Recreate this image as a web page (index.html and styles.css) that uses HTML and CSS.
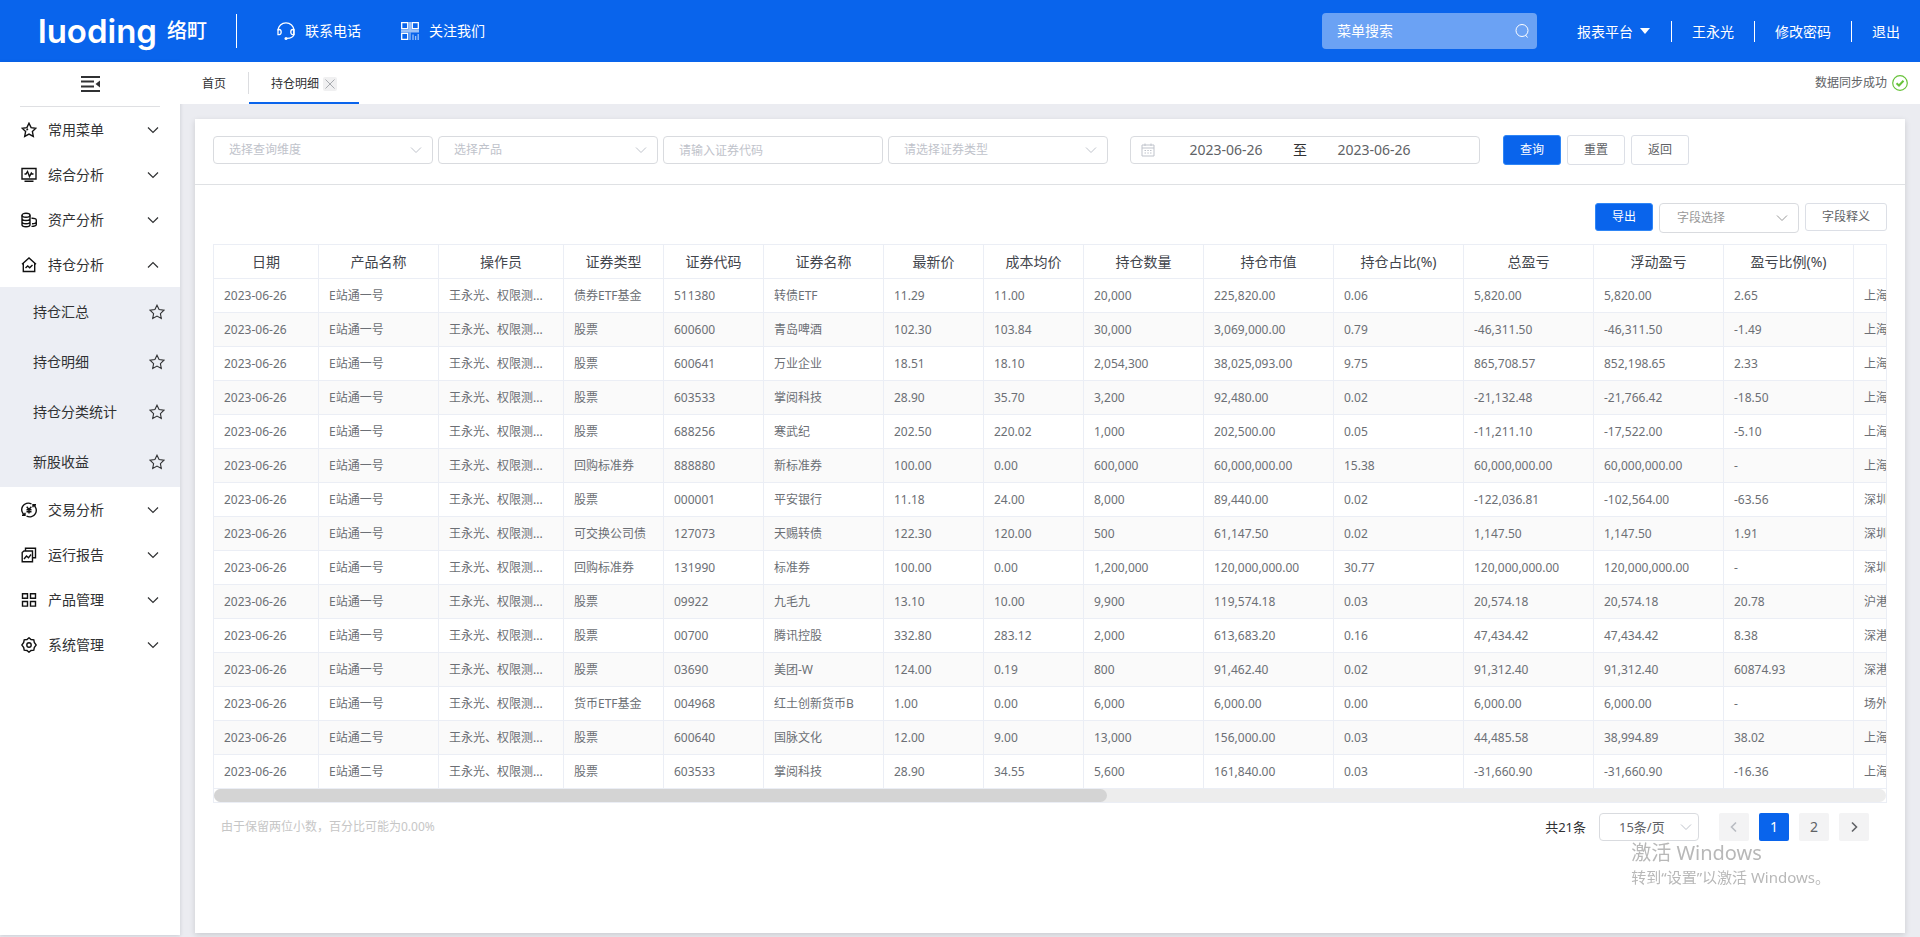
FILE: index.html
```html
<!DOCTYPE html>
<html lang="zh-CN">
<head>
<meta charset="utf-8">
<title>持仓明细</title>
<link rel="stylesheet" href="styles.css">
</head>
<body>
<svg class="defs" aria-hidden="true">
  <symbol id="down" viewBox="0 0 12 12"><path d="M1 3.5l5 5 5-5"/></symbol>
  <symbol id="up" viewBox="0 0 12 12"><path d="M1 8.5l5-5 5 5"/></symbol>
  <symbol id="star" viewBox="0 0 16 16"><path d="M8 1.2l2.1 4.4 4.8.6-3.5 3.4.9 4.8L8 12.1l-4.3 2.3.9-4.8L1.1 6.2l4.8-.6z"/></symbol>
</svg>

<header class="topbar">
  <div class="logo"><span class="logo-en">luoding</span><span class="logo-cn">络町</span></div>
  <nav class="contacts">
    <a href="#"><svg class="ic-top" viewBox="0 0 18 18"><path d="M1.2 8.500V8a7.800 7.200 0 0 1 15.600 0v4.500c0 2-3 3.700-7 3.900"/><path d="M1 7.500h1.200q2 0 2 2.500t-2 2.600H1zM17 7.500h-1.200q-2 0-2 2.500t2 2.600H17z"/><circle class="fill" cx="9" cy="16.400" r="1.500"/></svg>联系电话</a>
    <a href="#"><svg class="ic-top" viewBox="0 0 18 18"><path d="M.7.700h6v6h-6zM11.300.700h6v6h-6zM.7 11.300h6v6h-6z"/><path class="soft wide-bar" d="M0 9h18M9 0v7.500"/><path class="soft" d="M9 10.500v7.500M12 12.500v5.500M14.600 14v4M17.200 12v6"/></svg>关注我们</a>
  </nav>
  <form class="search">
    <input type="text" placeholder="菜单搜索" aria-label="菜单搜索">
    <button type="button" aria-label="搜索"><svg viewBox="0 0 16 16"><circle cx="8" cy="7.500" r="6"/><path d="M11.500 12l2 2.500"/></svg></button>
  </form>
  <nav class="account">
    <a href="#">报表平台<i class="caret"></i></a>
    <a href="#">王永光</a>
    <a href="#">修改密码</a>
    <a href="#">退出</a>
  </nav>
</header>

<div class="layout">
  <aside class="sidebar">
    <div class="collapse-row">
      <button class="collapse" type="button" aria-label="收起菜单"><svg viewBox="0 0 20 16"><path d="M1 1h19M1 5.500h13M1 10.500h13M1 15h19"/><path class="fill" d="M20 4.500v7L15.500 8z"/></svg></button>
    </div>
    <nav>
      <a class="item" href="#"><svg class="ic" viewBox="0 0 16 16"><path d="M8 1.2l2.1 4.4 4.800.6-3.500 3.400.9 4.800L8 12.100l-4.300 2.300.9-4.800L1.100 6.200l4.800-.6zM5.500 8.200l1.500-1.500"/></svg><span>常用菜单</span><svg class="arrow"><use href="#down"/></svg></a>
      <a class="item" href="#"><svg class="ic" viewBox="0 0 16 16"><path d="M1 1.500h14v10.500H1zM3.500 14.200h9M3.500 7H5l1.500-2.500 2 5L10.300 6l.7 1h1.500"/></svg><span>综合分析</span><svg class="arrow"><use href="#down"/></svg></a>
      <a class="item" href="#"><svg class="ic" viewBox="0 0 16 16"><ellipse cx="5" cy="3.200" rx="4" ry="2"/><path d="M1 3.200v9.600c0 1.200 1.800 2 4 2s4-.8 4-2V3.200M1 6.500c0 1.200 1.800 2 4 2s4-.8 4-2M1 9.700c0 1.200 1.800 2 4 2s4-.8 4-2M10.500 6.300c2.600-.2 4.800.5 4.800 1.700v4.500c0 1.200-2 2-4.800 1.900M15.300 10c0 1.200-2.200 1.800-4.300 1.700"/></svg><span>资产分析</span><svg class="arrow"><use href="#down"/></svg></a>
      <a class="item" href="#"><svg class="ic" viewBox="0 0 16 16"><path d="M1 7.200L8 1l7 6.200M2.300 6.300v8.200h11.400V6.300M4.500 11l2.200-2 2 1.700L11.500 8"/></svg><span>持仓分析</span><svg class="arrow"><use href="#up"/></svg></a>
      <div class="submenu">
        <a href="#"><span>持仓汇总</span><svg><use href="#star"/></svg></a>
        <a href="#"><span>持仓明细</span><svg><use href="#star"/></svg></a>
        <a href="#"><span>持仓分类统计</span><svg><use href="#star"/></svg></a>
        <a href="#"><span>新股收益</span><svg><use href="#star"/></svg></a>
      </div>
      <a class="item" href="#"><svg class="ic" viewBox="0 0 16 16"><path d="M4 13.300A6.500 6.500 0 0 1 10.500 2M12 2.700A6.500 6.500 0 0 1 5.500 14M1 13.300h3v-2.500M15 2.700h-3v2.500"/><path d="M5.700 4.800L8 7.500l2.300-2.700M8 7.500v4M5.500 7.700h5M5.500 9.700h5"/></svg><span>交易分析</span><svg class="arrow"><use href="#down"/></svg></a>
      <a class="item" href="#"><svg class="ic" viewBox="0 0 16 16"><path d="M4.500 4V1.200h10v9.600H12M1.200 5.500L3 4h8.500v10.800H1.200zM3 12l2.500-3 2 1.800L10 7.500"/></svg><span>运行报告</span><svg class="arrow"><use href="#down"/></svg></a>
      <a class="item" href="#"><svg class="ic" viewBox="0 0 16 16"><path d="M1.500 1.700h5v4.600h-5zM9.500 1.700h5v4.600h-5zM1.500 9.500h5v4.600h-5zM9.500 9.500h5v4.600h-5z"/></svg><span>产品管理</span><svg class="arrow"><use href="#down"/></svg></a>
      <a class="item" href="#"><svg class="ic" viewBox="0 0 16 16"><path d="M8 .8l2 1.700 2.800.3.500 2.700L15.200 8l-1.900 2.500-.5 2.700-2.800.3-2 1.700-2-1.700-2.800-.3-.5-2.700L.8 8l1.900-2.500.5-2.700L6 2.500z"/><circle cx="8" cy="8" r="2.200"/></svg><span>系统管理</span><svg class="arrow"><use href="#down"/></svg></a>
    </nav>
  </aside>

  <main class="main">
    <div class="tabs">
      <a class="tab" href="#">首页</a>
      <div class="tab active"><a href="#">持仓明细</a><button type="button" aria-label="关闭"><svg viewBox="0 0 14 14"><path d="M2.500 2.500l9 9M11.500 2.500l-9 9"/></svg></button></div>
      <div class="sync">数据同步成功<svg viewBox="0 0 16 16"><circle cx="8" cy="8" r="7.300"/><path class="tick" d="M4.500 8.200l2.500 2.300 4.500-4.700"/></svg></div>
    </div>

    <div class="page">
      <section class="card">
        <form class="filters">
          <div class="pick field"><select aria-label="选择查询维度"><option>选择查询维度</option></select><svg><use href="#down"/></svg></div>
          <div class="pick field"><select aria-label="选择产品"><option>选择产品</option></select><svg><use href="#down"/></svg></div>
          <input class="field code" type="text" placeholder="请输入证券代码" aria-label="证券代码">
          <div class="pick field"><select aria-label="请选择证券类型"><option>请选择证券类型</option></select><svg><use href="#down"/></svg></div>
          <div class="range">
            <svg viewBox="0 0 14 14"><path d="M1 2h12v11H1zM1 5h12M4 .5V3M10 .5V3M3.500 7.500h1.500M6.300 7.500h1.500M9 7.500h1.500M3.500 10h1.500M6.300 10h1.500M9 10h1.500"/></svg>
            <input type="text" value="2023-06-26" aria-label="开始日期"><span>至</span><input type="text" value="2023-06-26" aria-label="结束日期">
          </div>
          <div class="actions">
            <button class="btn primary" type="button">查询</button>
            <button class="btn" type="button">重置</button>
            <button class="btn" type="button">返回</button>
          </div>
        </form>

        <div class="toolbar">
          <button class="btn small primary" type="button">导出</button>
          <div class="pick columns"><select aria-label="字段选择"><option>字段选择</option></select><svg><use href="#down"/></svg></div>
          <button class="btn small wide" type="button">字段释义</button>
        </div>

        <div class="table-box">
          <table>
            <colgroup><col class="w105"><col class="w120"><col class="w125"><col class="w100"><col class="w100"><col class="w120"><col class="w100"><col class="w100"><col class="w120"><col class="w130"><col class="w130"><col class="w130"><col class="w130"><col class="w130"><col></colgroup>
            <thead><tr><th>日期</th><th>产品名称</th><th>操作员</th><th>证券类型</th><th>证券代码</th><th>证券名称</th><th>最新价</th><th>成本均价</th><th>持仓数量</th><th>持仓市值</th><th>持仓占比(%)</th><th>总盈亏</th><th>浮动盈亏</th><th>盈亏比例(%)</th><th></th></tr></thead>
            <tbody>
              <tr><td>2023-06-26</td><td>E站通一号</td><td>王永光、权限测...</td><td>债券ETF基金</td><td>511380</td><td>转债ETF</td><td>11.29</td><td>11.00</td><td>20,000</td><td>225,820.00</td><td>0.06</td><td>5,820.00</td><td>5,820.00</td><td>2.65</td><td>上海</td></tr>
              <tr><td>2023-06-26</td><td>E站通一号</td><td>王永光、权限测...</td><td>股票</td><td>600600</td><td>青岛啤酒</td><td>102.30</td><td>103.84</td><td>30,000</td><td>3,069,000.00</td><td>0.79</td><td>-46,311.50</td><td>-46,311.50</td><td>-1.49</td><td>上海</td></tr>
              <tr><td>2023-06-26</td><td>E站通一号</td><td>王永光、权限测...</td><td>股票</td><td>600641</td><td>万业企业</td><td>18.51</td><td>18.10</td><td>2,054,300</td><td>38,025,093.00</td><td>9.75</td><td>865,708.57</td><td>852,198.65</td><td>2.33</td><td>上海</td></tr>
              <tr><td>2023-06-26</td><td>E站通一号</td><td>王永光、权限测...</td><td>股票</td><td>603533</td><td>掌阅科技</td><td>28.90</td><td>35.70</td><td>3,200</td><td>92,480.00</td><td>0.02</td><td>-21,132.48</td><td>-21,766.42</td><td>-18.50</td><td>上海</td></tr>
              <tr><td>2023-06-26</td><td>E站通一号</td><td>王永光、权限测...</td><td>股票</td><td>688256</td><td>寒武纪</td><td>202.50</td><td>220.02</td><td>1,000</td><td>202,500.00</td><td>0.05</td><td>-11,211.10</td><td>-17,522.00</td><td>-5.10</td><td>上海</td></tr>
              <tr><td>2023-06-26</td><td>E站通一号</td><td>王永光、权限测...</td><td>回购标准券</td><td>888880</td><td>新标准券</td><td>100.00</td><td>0.00</td><td>600,000</td><td>60,000,000.00</td><td>15.38</td><td>60,000,000.00</td><td>60,000,000.00</td><td>-</td><td>上海</td></tr>
              <tr><td>2023-06-26</td><td>E站通一号</td><td>王永光、权限测...</td><td>股票</td><td>000001</td><td>平安银行</td><td>11.18</td><td>24.00</td><td>8,000</td><td>89,440.00</td><td>0.02</td><td>-122,036.81</td><td>-102,564.00</td><td>-63.56</td><td>深圳</td></tr>
              <tr><td>2023-06-26</td><td>E站通一号</td><td>王永光、权限测...</td><td>可交换公司债</td><td>127073</td><td>天赐转债</td><td>122.30</td><td>120.00</td><td>500</td><td>61,147.50</td><td>0.02</td><td>1,147.50</td><td>1,147.50</td><td>1.91</td><td>深圳</td></tr>
              <tr><td>2023-06-26</td><td>E站通一号</td><td>王永光、权限测...</td><td>回购标准券</td><td>131990</td><td>标准券</td><td>100.00</td><td>0.00</td><td>1,200,000</td><td>120,000,000.00</td><td>30.77</td><td>120,000,000.00</td><td>120,000,000.00</td><td>-</td><td>深圳</td></tr>
              <tr><td>2023-06-26</td><td>E站通一号</td><td>王永光、权限测...</td><td>股票</td><td>09922</td><td>九毛九</td><td>13.10</td><td>10.00</td><td>9,900</td><td>119,574.18</td><td>0.03</td><td>20,574.18</td><td>20,574.18</td><td>20.78</td><td>沪港</td></tr>
              <tr><td>2023-06-26</td><td>E站通一号</td><td>王永光、权限测...</td><td>股票</td><td>00700</td><td>腾讯控股</td><td>332.80</td><td>283.12</td><td>2,000</td><td>613,683.20</td><td>0.16</td><td>47,434.42</td><td>47,434.42</td><td>8.38</td><td>深港</td></tr>
              <tr><td>2023-06-26</td><td>E站通一号</td><td>王永光、权限测...</td><td>股票</td><td>03690</td><td>美团-W</td><td>124.00</td><td>0.19</td><td>800</td><td>91,462.40</td><td>0.02</td><td>91,312.40</td><td>91,312.40</td><td>60874.93</td><td>深港</td></tr>
              <tr><td>2023-06-26</td><td>E站通一号</td><td>王永光、权限测...</td><td>货币ETF基金</td><td>004968</td><td>红土创新货币B</td><td>1.00</td><td>0.00</td><td>6,000</td><td>6,000.00</td><td>0.00</td><td>6,000.00</td><td>6,000.00</td><td>-</td><td>场外</td></tr>
              <tr><td>2023-06-26</td><td>E站通二号</td><td>王永光、权限测...</td><td>股票</td><td>600640</td><td>国脉文化</td><td>12.00</td><td>9.00</td><td>13,000</td><td>156,000.00</td><td>0.03</td><td>44,485.58</td><td>38,994.89</td><td>38.02</td><td>上海</td></tr>
              <tr><td>2023-06-26</td><td>E站通二号</td><td>王永光、权限测...</td><td>股票</td><td>603533</td><td>掌阅科技</td><td>28.90</td><td>34.55</td><td>5,600</td><td>161,840.00</td><td>0.03</td><td>-31,660.90</td><td>-31,660.90</td><td>-16.36</td><td>上海</td></tr>
            </tbody>
          </table>
          <div class="scroll-track"><div class="scroll-thumb"></div></div>
        </div>

        <footer class="foot">
          <p class="note">由于保留两位小数，百分比可能为0.00%</p>
          <span class="total">共21条</span>
          <div class="pick size"><select aria-label="每页条数"><option>15条/页</option></select><svg><use href="#down"/></svg></div>
          <div class="pager">
            <button type="button" disabled aria-label="上一页"><svg viewBox="0 0 12 12"><path d="M8 1.500L3.500 6 8 10.500"/></svg></button>
            <button type="button" class="current">1</button>
            <button type="button">2</button>
            <button type="button" aria-label="下一页"><svg viewBox="0 0 12 12"><path d="M4 1.500L8.500 6 4 10.500"/></svg></button>
          </div>
        </footer>
      </section>
    </div>
  </main>
</div>

<div class="watermark"><p class="wm-title">激活 Windows</p><p>转到“设置”以激活 Windows。</p></div>
</body>
</html>
```
FILE: styles.css
```css
* { box-sizing: border-box; }
body {
  margin: 0;
  min-height: 100vh;
  display: flex;
  flex-direction: column;
  background: #ebecf1;
  color: #303133;
  font: 14px/20px "Noto Sans", "Noto Sans CJK SC", sans-serif;
}
a { color: inherit; text-decoration: none; }
p { margin: 0; }
button, input, select { font: inherit; color: inherit; margin: 0; }
button { padding: 0; border: 0; background: none; cursor: pointer; }
svg { fill: none; stroke: currentColor; flex: none; }
.defs { position: absolute; width: 0; height: 0; }

/* top bar */
.topbar {
  height: 62px;
  display: flex;
  align-items: center;
  padding: 0 20px 0 38px;
  background: #0964ec;
  color: #fff;
}
.logo {
  display: flex;
  align-items: center;
  gap: 10px;
  width: 199px;
  height: 34px;
  border-right: 1px solid #fff;
}
.logo-en { font: 600 33px/34px Inter, sans-serif; }
.logo-cn { font-size: 20px; font-weight: 500; line-height: 32px; }
.contacts { display: flex; gap: 40px; margin-left: 40px; }
.contacts a { display: flex; align-items: center; gap: 10px; }
.ic-top { width: 18px; height: 18px; stroke-width: 1.3; }
.soft { opacity: .6; }
.wide-bar { stroke-width: 3; }
.search {
  display: flex;
  align-items: center;
  width: 215px;
  height: 36px;
  margin-left: auto;
  padding: 0 7px 0 15px;
  border-radius: 4px;
  background: #6ba2f4;
}
.search input { flex: 1; min-width: 0; padding: 0; border: 0; outline: 0; background: none; }
.search input::placeholder { color: #fff; }
.search button, .search svg { display: block; width: 16px; height: 16px; }
.account { display: flex; align-items: center; margin-left: 20px; }
.account a { display: flex; align-items: center; padding: 0 20px; line-height: 21px; border-left: 1px solid #fff; }
.account a:first-child { border-left: 0; padding-right: 21px; }
.account a:last-child { padding-right: 0; }
.caret { margin-left: 7px; border: 5px solid transparent; border-top: 6px solid #fff; border-bottom: 0; }

/* shell */
.layout { flex: 1; display: flex; }
.sidebar { width: 180px; flex: none; margin-bottom: 2px; background: #fff; box-shadow: 0 1px 4px rgba(0, 21, 41, .15); }
.collapse-row { display: flex; justify-content: center; align-items: center; height: 45px; margin: 0 20px; border-bottom: 1px solid #dfe0e3; }
.collapse svg { display: block; width: 20px; height: 16px; stroke-width: 2; }
.fill { fill: currentColor; stroke: none; }
.item { display: flex; align-items: center; height: 45px; padding: 0 21px; gap: 11px; }
.item span { flex: 1; }
.ic { width: 16px; height: 16px; stroke: #111; stroke-width: 1.4; }
.arrow { width: 12px; height: 12px; stroke-width: 1.2; }
.submenu { background: #eceef4; }
.submenu a { display: flex; align-items: center; justify-content: space-between; height: 50px; padding: 0 15px 0 33px; }
.submenu svg { width: 16px; height: 16px; stroke-width: 1.1; }

.main { flex: 1; min-width: 0; display: flex; flex-direction: column; }
.tabs { display: flex; height: 42px; background: #fff; font-size: 12px; }
.tab { display: flex; align-items: center; height: 42px; padding: 2px 22px 0; }
.tab.active { gap: 4px; border-bottom: 2px solid #0964ec; padding-top: 3px; }
.tab:first-child { background: linear-gradient(#dcdde0, #dcdde0) right center / 1px 22px no-repeat; padding-right: 23px; }
.tab button { width: 14px; height: 14px; border-radius: 2px; background: #f0f0f1; color: #a8abb0; }
.tab button svg { display: block; width: 14px; height: 14px; }
.sync { display: flex; align-items: center; gap: 5px; margin-left: auto; padding-right: 12px; color: #606266; }
.sync svg { width: 16px; height: 16px; stroke: #67c23a; stroke-width: 1.2; }
.sync .tick { stroke-width: 2; }

.page { flex: 1; display: flex; padding: 15px 15px 4px; }
.card { flex: 1; min-width: 0; background: #fff; box-shadow: 0 2px 6px rgba(0, 0, 0, .14); }

/* filters */
.filters { display: flex; align-items: center; gap: 5px; padding: 16px 18px 19px; border-bottom: 1px solid #dfe1e4; font-size: 12px; }
.pick { display: grid; align-items: center; border: 1px solid #d9dbdf; border-radius: 4px; background: #fff; color: #bfc3cb; font-size: 12px; }
.pick select { grid-area: 1 / 1; width: 100%; height: 100%; padding: 0 30px 0 15px; border: 0; outline: 0; appearance: none; background: none; }
.pick svg { grid-area: 1 / 1; justify-self: end; width: 12px; height: 12px; margin-right: 10px; pointer-events: none; }
.field { width: 220px; height: 28px; }
.code { padding: 0 15px; border: 1px solid #d9dbdf; border-radius: 4px; outline: 0; }
.code::placeholder { color: #bfc3cb; }
.range { display: flex; align-items: center; width: 350px; height: 28px; margin-left: 17px; padding: 0 10px; border: 1px solid #d9dbdf; border-radius: 4px; font-size: 14px; }
.range svg { width: 14px; height: 14px; stroke: #bfc3cb; }
.range input { width: 134px; padding: 0; border: 0; outline: 0; background: none; text-align: center; color: #606266; }
.range svg + input { margin-left: 4px; }
.actions { display: flex; gap: 6px; margin-left: 18px; }
.btn { width: 58px; height: 30px; border: 1px solid #dcdfe6; border-radius: 3px; background: #fff; color: #606266; font-size: 12px; }
.btn.primary { border-color: #2f86f6; background: #0964ec; color: #fff; }
.btn.small { height: 28px; }
.btn.wide { width: 82px; }

.toolbar { display: flex; justify-content: flex-end; align-items: flex-start; gap: 6px; padding: 18px 18px 11px; }
.columns { width: 140px; height: 30px; color: #999; }
.columns select { padding-left: 17px; }

/* table */
.table-box { margin: 0 18px; border: 1px solid #ebeef5; overflow: hidden; }
table { width: 100%; table-layout: fixed; border-collapse: separate; border-spacing: 0; }
th, td { height: 34px; padding: 0 0 0 10px; border-right: 1px solid #ebeef5; border-bottom: 1px solid #ebeef5; white-space: nowrap; overflow: hidden; }
th:last-child, td:last-child { border-right: 0; }
th { padding: 0; font-size: 14px; font-weight: 400; color: #42454c; }
td { font-size: 12px; color: #6c6f75; }
tbody tr:nth-child(even) { background: #fafafa; }
.w100 { width: 100px; }
.w105 { width: 105px; }
.w120 { width: 120px; }
.w125 { width: 125px; }
.w130 { width: 130px; }
.scroll-track { height: 13px; border-radius: 7px; background: #ededed; }
.scroll-thumb { width: 53.4%; height: 13px; border-radius: 7px; background: #d4d4d4; }

.foot { display: flex; align-items: center; padding: 10px 36px 20px 26px; }
.note { margin-right: auto; font-size: 12px; color: #c6c6c6; }
.total { font-size: 13px; }
.size { width: 100px; height: 28px; margin: 0 20px 0 13px; font-size: 13px; }
.size select { padding-left: 19px; color: #606266; }
.size svg { margin-right: 6px; }
.pager { display: flex; gap: 10px; }
.pager button { display: grid; place-items: center; width: 30px; height: 28px; border-radius: 2px; background: #f3f3f4; color: #606266; }
.pager button:disabled { color: #b9bcc2; }
.pager .current { background: #0964ec; color: #fff; }
.pager svg { width: 12px; height: 12px; stroke-width: 1.6; }

.watermark { position: fixed; right: 90px; bottom: 48px; color: #b8b8b8; font-size: 15px; line-height: 24px; pointer-events: none; }
.wm-title { font-size: 20px; }
```
